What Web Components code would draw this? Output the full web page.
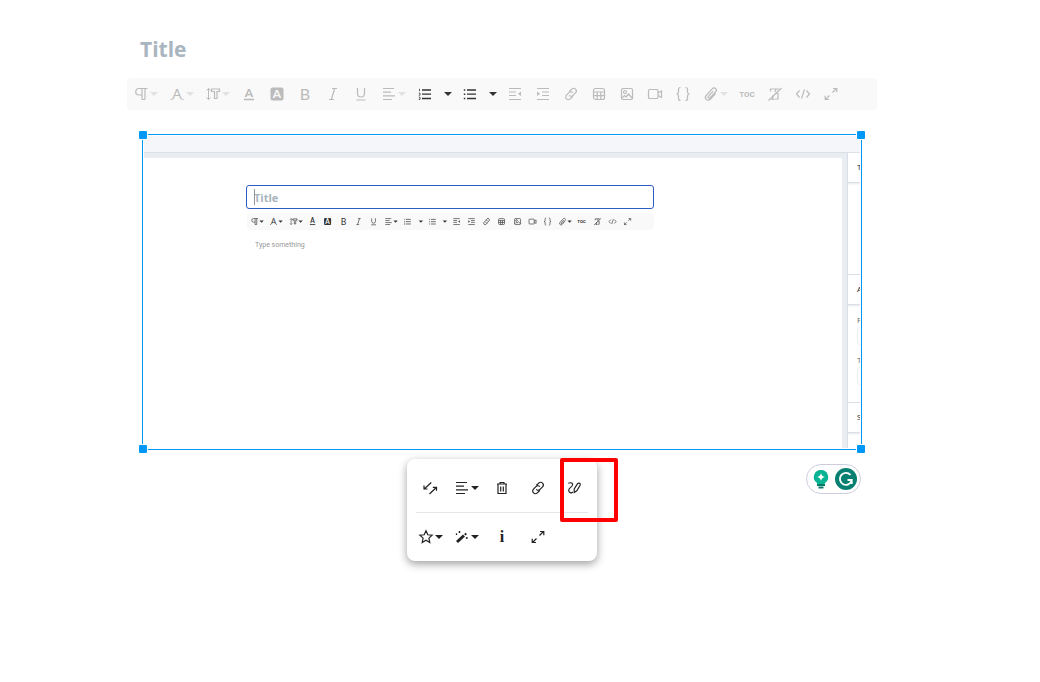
<!DOCTYPE html>
<html lang="en">

<head>
    <meta charset="UTF-8">
    <meta name="viewport" content="width=device-width, initial-scale=1.0">
    <title>Article editor</title>
    <style>
        body {
            margin: 0;
            background: #fff;
            font-family: "Open Sans", "Noto Sans", sans-serif;
        }
    </style>
</head>

<body>
    <article-editor>
        <image-frame>
            <editor-preview></editor-preview>
        </image-frame>
        <image-popup slot="popup"></image-popup>
        <writing-assistant slot="assistant"></writing-assistant>
    </article-editor>
    <script>
        // every icon is drawn in a 28x28 box around 14,14
        const ICONS = {
            paragraph: '<path d="M20.500 8.500h-8.500a3 3 0 0 0 0 6.500h3M15 8.500v11M18 8.500v11M15 19.500h3"/>',
            family: '<path d="M7.500 19.500h2M18.500 19.500h2" stroke-width="1"/><text x="14" y="19" font-size="14" font-family="Lato">A</text>',
            size: '<path d="M9.500 8.500v11M7.500 10.500l2-2 2 2M7.500 17.500l2 2 2-2" stroke-width="1"/><path d="M12.500 9h8v2.500h-2.500v7h-2.500v-7h-3z"/>',
            color: '<text x="14" y="17" font-size="12" font-weight="700" font-family="Lato">A</text><path d="M9 19.500h10" stroke-width="1.600"/>',
            background: '<rect x="7.500" y="7.500" width="13" height="13" rx="2" fill="currentColor" stroke="none"/><text x="14" y="18" font-size="12" font-weight="700" font-family="Lato" style="fill:#f9f9f9">A</text>',
            bold: '<text x="14" y="20" font-size="16" font-family="Lato">B</text>',
            italic: '<path d="M13 8.500h5M10 19.500h5M15.700 8.500l-3.400 11"/>',
            underline: '<path d="M10.500 8v5.500a3.500 3.500 0 0 0 7 0V8M9.500 20h9"/>',
            align: '<path d="M8 8.500h11M8 12.200h8M8 15.900h12M8 19.500h9"/>',
            ordered: '<path d="M11 10h9M11 14.200h9M11 18.500h9" stroke-width="1.300"/><path d="M8.500 8.800v2.400M7.800 13.200h1.200v2H7.800M7.800 17.200h1.200v2.300H7.800" stroke-width=".800"/>',
            unordered: '<path d="M11 10h9M11 14.200h9M11 18.500h9" stroke-width="1.300"/><path d="M7.800 10h1.500M7.800 14.200h1.500M7.800 18.500h1.500" stroke-width="1.600"/>',
            outdent: '<path d="M8 8.500h12M8 12h7M8 15.500h7M8 19.500h12"/><path d="M20 11.500v4.500l-3-2.200z" fill="currentColor" stroke="none"/>',
            indent: '<path d="M8 8.500h12M13 12h7M13 15.500h7M8 19.500h12"/><path d="M8 11.500v4.500l3-2.200z" fill="currentColor" stroke="none"/>',
            link: '<g transform="rotate(-45 14 14)"><path d="M13.500 17h-3.500a2.700 2.700 0 0 1 0-5.400h3.800a2.600 2.600 0 0 1 2.500 2.700M14.500 11h3.500a2.700 2.700 0 0 1 0 5.400h-3.800a2.600 2.600 0 0 1-2.500-2.700"/></g>',
            table: '<rect x="8.500" y="8.500" width="11" height="11" rx="2"/><path d="M8.500 12h11M8.500 15.700h11M12.200 12v7.500M15.800 12v7.500"/>',
            image: '<rect x="8.500" y="8.500" width="11" height="11" rx="1.500"/><circle cx="12" cy="12" r="1.500"/><path d="M9 18l2.500-2.500 1.500 1.500 2.500-3 4 4.500"/>',
            video: '<rect x="7.500" y="9.500" width="9.500" height="9" rx="1"/><path d="M17 13l3.500-2v6.500l-3.500-2"/>',
            braces: '<path d="M11.500 7.500c-2 0-2 .8-2 2v2.500c0 1.300-.5 1.900-1.900 2 1.400.1 1.900.7 1.900 2v2.500c0 1.200 0 2 2 2M16.500 7.500c2 0 2 .8 2 2v2.500c0 1.300.5 1.900 1.900 2-1.400.1-1.900.7-1.900 2v2.500c0 1.200 0 2-2 2"/>',
            attach: '<path d="M18.500 13.500l-5 5.500c-1.500 1.600-3.400 1.400-4.400.3-1-1.100-1-2.600.1-3.800l6-6.600c1.100-1.200 2.600-1.200 3.500-.3.900.9.900 2.200-.1 3.300l-5.400 5.800c-.6.700-1.400.7-1.800.2-.5-.5-.4-1.200.2-1.800l4.600-5"/>',
            toc: '<text x="14" y="17" font-size="8" font-weight="700" font-family="Roboto">TOC</text>',
            clear: '<path d="M9.500 11.500v-2.500h8.500M15 9l-1 3M12.500 15l-1 4M10.500 19.500h3" /><path d="M7.500 20.500L20.500 8M14 13.500h3v5.500h-3"/>',
            code: '<path d="M10.500 10.500L7.500 14l3 3.500M17.500 10.500l3 3.500-3 3.500M15.500 9.500l-3 9"/>',
            expand: '<path d="M15.500 12.500l4-4M16 8.500h3.800v3.800M12.500 15.500l-4 4M12 19.500H8.200v-3.800"/>',
            replace: '<path d="M15.300 8.500l-6.800 6.200M8 11.500v3.500h3.500M13.500 20l6.500-6.200M16.800 13.300h3.700v3.500"/>',
            trash: '<path d="M9 10h10M12 10V8.500h4V10M10 10v9.500h8V10M12.700 12.500v5M15.300 12.500v5"/>',
            edit: '<path d="M8.300 9.200c3.500-1.200 5.400.5 3.700 2.800-1.600 2-3.500 2.400-3.300 4.500.2 2.200 2.500 3 4.300 1.500M14.300 18.500l-.1-3.500 3.500-5.500c1.500-1 3 0 2.400 1.800l-3.300 5.500z"/>',
            star: '<path d="M14 7.800l1.800 4 4.300.4-3.200 2.900.9 4.400-3.800-2.200-3.800 2.200.9-4.400-3.200-2.900 4.300-.4z"/>',
            wand: '<path d="M9 19l7-6.500" stroke-width="3"/><path d="M16.800 11.800l1.500-1.400" stroke-width="2"/><path d="M11.500 8v2M10.500 9h2M8.500 10.500v1.500M7.800 11.200h1.500M18.800 14v2M17.800 15h2" stroke-width="1"/>',
            info: '<text x="14" y="19" font-size="16" font-weight="700" font-family="Liberation Serif">i</text>'
        };
        const CARET = '<path class="caret" d="M-4-2h8l-4 4z" stroke="none"/>';

        function icon(name, menu) {
            const art = name === 'caret' ? `<g transform="translate(9 14)">${CARET}</g>`
                : ICONS[name] + (menu ? `<g transform="translate(27 14)">${CARET}</g>` : '');
            const width = name === 'caret' ? 17 : menu ? 36 : 28;
            return `<svg viewBox="0 0 ${width} 28" aria-hidden="true">${art}</svg>`;
        }

        const ICON_STYLE = `
            button {
                display: block;
                min-width: 0;
                margin: 0;
                padding: 0;
                border: 0;
                background: none;
                color: inherit;
                cursor: pointer;
            }
            svg {
                display: block;
                width: 100%;
                fill: none;
                stroke: currentColor;
                stroke-width: 1.2;
            }
            svg text {
                fill: currentColor;
                stroke: none;
                text-anchor: middle;
            }
            .caret {
                fill: var(--caret-color, currentColor);
            }`;

        customElements.define('format-toolbar', class extends HTMLElement {
            constructor() {
                super().attachShadow({ mode: 'open' });
            }
            connectedCallback() {
                const locked = this.hasAttribute('locked');
                const items = [
                    'paragraph+', 'family+', 'size+', 'color', 'background', 'bold', 'italic', 'underline',
                    'align+', 'ordered/', 'unordered/', 'outdent', 'indent', 'link', 'table', 'image',
                    'video', 'braces', 'attach+', 'toc', 'clear', 'code', 'expand'
                ];
                this.shadowRoot.innerHTML = `
          <style>
            :host {
              display: flex;
              align-items: center;
              box-sizing: border-box;
              background: #f9f9f9;
              border-radius: 4px;
              color: #333;
            }
            ${ICON_STYLE}
            button { flex: 28 1 0; }
            button.menu { flex-grow: 36; }
            button.arrow { flex-grow: 17; }
            button:disabled {
              --caret-color: #e2e2e2;
              color: #bbb;
              cursor: default;
            }
          </style>
          ${items.map(item => {
                    const name = item.replace(/[^a-z]/g, '');
                    const menu = item.endsWith('+');
                    const split = item.endsWith('/');
                    return `<button type="button" class="${menu ? 'menu' : ''}" aria-label="${name}"${locked && !split ? ' disabled' : ''}>${icon(name, menu)}</button>`
                        + (split ? `<button type="button" class="arrow" aria-label="${name} options">${icon('caret')}</button>` : '');
                }).join('')}`;
            }
        });

        customElements.define('article-editor', class extends HTMLElement {
            constructor() {
                super().attachShadow({ mode: 'open' }).innerHTML = `
          <style>
            :host {
              display: block;
              padding: 35px 163px 40px 127px;
            }
            .title {
              display: block;
              box-sizing: border-box;
              width: 100%;
              height: 28px;
              margin: 0 0 15px;
              padding: 0 13px;
              border: 0;
              outline: 0;
              background: none;
              font: 700 21px/28px "Open Sans", "Noto Sans", sans-serif;
            }
            .title::placeholder { color: #a9b5c0; opacity: 1; }
            format-toolbar {
              height: 32px;
              padding-right: 32px;
            }
            .body { margin: 24px 15px 0; }
            .tools {
              display: grid;
              grid-template-columns: 1fr auto 1fr;
              align-items: start;
              margin-top: 9px;
            }
            slot[name="popup"]::slotted(*) { grid-column: 2; }
            slot[name="assistant"]::slotted(*) { justify-self: end; margin: 5px 1px 0 0; }
          </style>
          <input class="title" type="text" aria-label="Title" placeholder="Title">
          <format-toolbar locked></format-toolbar>
          <div class="body">
            <slot></slot>
            <div class="tools">
              <slot name="popup"></slot>
              <slot name="assistant"></slot>
            </div>
          </div>`;
            }
        });

        customElements.define('image-frame', class extends HTMLElement {
            constructor() {
                super().attachShadow({ mode: 'open' }).innerHTML = `
          <style>
            :host {
              display: block;
              position: relative;
              padding: 1px;
              border: 1px solid #0098f7;
            }
            i {
              position: absolute;
              width: 8px;
              height: 8px;
              background: #0098f7;
              border: 1px solid #fff;
              border-radius: 2px;
            }
            .n { top: -5px; }
            .s { bottom: -5px; }
            .w { left: -5px; }
            .e { right: -5px; }
          </style>
          <slot></slot>
          <i class="n w"></i><i class="n e"></i><i class="s w"></i><i class="s e"></i>`;
            }
        });

        customElements.define('editor-preview', class extends HTMLElement {
            constructor() {
                super().attachShadow({ mode: 'open' }).innerHTML = `
          <style>
            :host {
              display: block;
              overflow: hidden;
              background: #e9edf2;
            }
            header {
              height: 16px;
              background: #f5f6f9;
              border-bottom: 1px solid #dbe0e6;
            }
            .columns { display: flex; height: 295px; }
            main {
              flex: 1;
              margin: 5px 5px 0 0;
              padding: 27px 188px 0 102px;
              background: #fff;
            }
            main input {
              display: block;
              box-sizing: border-box;
              width: 100%;
              height: 24px;
              padding: 0 7px;
              border: 1px solid #2d5dc2;
              border-radius: 3px;
              outline: 0;
              background: #fff;
              font: 700 11px/22px "Open Sans", "Noto Sans", sans-serif;
            }
            main input::placeholder { color: #a9b5bc; opacity: 1; }
            .title { display: grid; }
            .title > * { grid-area: 1 / 1; }
            .cursor {
              z-index: 1;
              width: 1px;
              height: 16px;
              margin: 4px 8px;
              background: #8b979e;
            }
            format-toolbar {
              height: 17px;
              margin: 4px 0 0 1px;
              padding-right: 19px;
            }
            p {
              margin: 10px 9px;
              color: #999;
              font: 7px/11px Roboto, sans-serif;
            }
            aside {
              flex: none;
              box-sizing: border-box;
              width: 13px;
              overflow: hidden;
              border-left: 1px solid #d8dee7;
              background: #fff;
              color: #222;
              font: 8px/28px "Open Sans", sans-serif;
            }
            h2 {
              height: 29px;
              margin: 0;
              padding-left: 9px;
              border-bottom: 1px solid #dbe0e6;
              box-shadow: 0 1px 2px #e4e7ec;
              font: inherit;
            }
            .group + h2 { border-top: 1px solid #dbe0e6; }
            .group { height: 91px; }
            .fields { height: 97px; padding: 9px 0 0 9px; box-sizing: border-box; }
            label { display: block; height: 40px; line-height: 12px; color: #666; }
            label span {
              display: block;
              width: 40px;
              height: 16px;
              margin-top: 1px;
              border: 1px solid #ececec;
              border-radius: 3px;
            }
          </style>
          <header></header>
          <div class="columns">
            <main>
              <div class="title">
                <input type="text" aria-label="Title" placeholder="Title">
                <span class="cursor"></span>
              </div>
              <format-toolbar></format-toolbar>
              <p>Type something</p>
            </main>
            <aside>
              <h2>T</h2>
              <div class="group"></div>
              <h2>A</h2>
              <div class="group fields">
                <label>F<span></span></label>
                <label>T<span></span></label>
              </div>
              <h2>S</h2>
            </aside>
          </div>`;
            }
        });

        customElements.define('image-popup', class extends HTMLElement {
            constructor() {
                const button = (name, menu) => `<button type="button" class="${menu ? 'menu' : ''}" aria-label="${name}">${icon(name, menu)}</button>`;
                super().attachShadow({ mode: 'open' }).innerHTML = `
          <style>
            :host {
              display: block;
              position: relative;
              width: 190px;
              border-radius: 8px;
              background: #fff;
              box-shadow: 0 3px 9px rgba(0, 0, 0, .38);
              color: #222;
            }
            ${ICON_STYLE}
            .row { display: flex; padding: 15px 5px 10px; }
            .row + hr + .row { padding: 10px 5px; }
            button { box-sizing: border-box; width: 36px; padding: 0 4px; }
            button.menu { padding: 0; }
            hr {
              height: 1px;
              margin: 0 9px;
              border: 0;
              background: #e6e6e6;
            }
            .marker {
              position: absolute;
              top: -1px;
              right: -21px;
              width: 50px;
              height: 56px;
              border: 4px solid #f00;
              border-radius: 2px;
            }
          </style>
          <div class="row">${button('replace')}${button('align', true)}${button('trash')}${button('link')}${button('edit')}</div>
          <hr>
          <div class="row">${button('star', true)}${button('wand', true)}${button('info')}${button('expand')}</div>
          <div class="marker"></div>`;
            }
        });

        customElements.define('writing-assistant', class extends HTMLElement {
            constructor() {
                super().attachShadow({ mode: 'open' }).innerHTML = `
          <style>
            :host {
              display: flex;
              align-items: center;
              gap: 5px;
              box-sizing: border-box;
              width: 55px;
              height: 30px;
              padding: 0 3px 0 5px;
              border: 1px solid #cdcddd;
              border-radius: 15px;
              background: #fff;
            }
            button {
              flex: none;
              padding: 0;
              border: 0;
              background: none;
              cursor: pointer;
            }
            svg { display: block; }
          </style>
          <button type="button" aria-label="Suggestions">
            <svg width="18" height="20" viewBox="0 0 18 20">
              <path d="M9 1a7 7 0 0 1 4.500 12.500l-1 1.500h-7l-1-1.500A7 7 0 0 1 9 1z" fill="#08b394"/>
              <path d="M5 16h8M6.500 18.500h5" stroke="#087a69" stroke-width="1.800"/>
              <path d="M9 4q.6 3.400 4 4-3.400.6-4 4-.6-3.400-4-4 3.400-.6 4-4z" fill="#fff"/>
            </svg>
          </button>
          <button type="button" aria-label="Check writing">
            <svg width="22" height="22" viewBox="0 0 22 22">
              <circle cx="11" cy="11" r="11" fill="#078071"/>
              <path d="M15.500 7a6 6 0 1 0 1.200 5.500M12.500 12h4.200v4" fill="none" stroke="#fff" stroke-width="1.900"/>
            </svg>
          </button>`;
            }
        });
    </script>
</body>

</html>
